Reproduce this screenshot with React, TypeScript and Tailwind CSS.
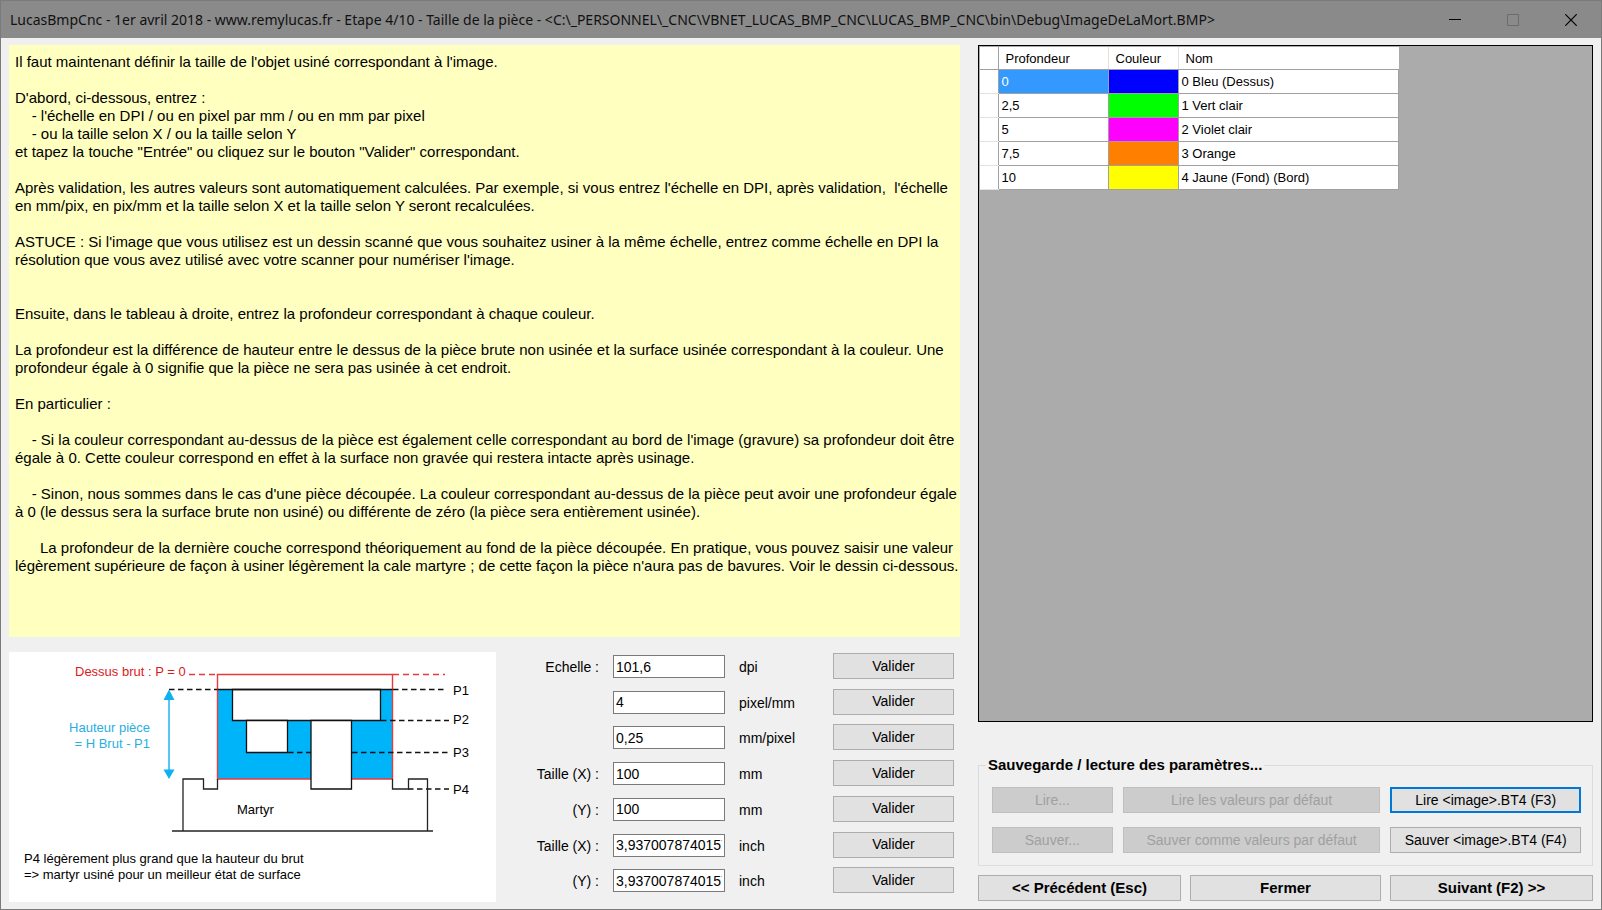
import React, { useState } from "react";

const helpText = `Il faut maintenant définir la taille de l'objet usiné correspondant à l'image.

D'abord, ci-dessous, entrez :
    - l'échelle en DPI / ou en pixel par mm / ou en mm par pixel
    - ou la taille selon X / ou la taille selon Y
et tapez la touche "Entrée" ou cliquez sur le bouton "Valider" correspondant.

Après validation, les autres valeurs sont automatiquement calculées. Par exemple, si vous entrez l'échelle en DPI, après validation,  l'échelle
en mm/pix, en pix/mm et la taille selon X et la taille selon Y seront recalculées.

ASTUCE : Si l'image que vous utilisez est un dessin scanné que vous souhaitez usiner à la même échelle, entrez comme échelle en DPI la
résolution que vous avez utilisé avec votre scanner pour numériser l'image.


Ensuite, dans le tableau à droite, entrez la profondeur correspondant à chaque couleur.

La profondeur est la différence de hauteur entre le dessus de la pièce brute non usinée et la surface usinée correspondant à la couleur. Une
profondeur égale à 0 signifie que la pièce ne sera pas usinée à cet endroit.

En particulier :

    - Si la couleur correspondant au-dessus de la pièce est également celle correspondant au bord de l'image (gravure) sa profondeur doit être
égale à 0. Cette couleur correspond en effet à la surface non gravée qui restera intacte après usinage.

    - Sinon, nous sommes dans le cas d'une pièce découpée. La couleur correspondant au-dessus de la pièce peut avoir une profondeur égale
à 0 (le dessus sera la surface brute non usiné) ou différente de zéro (la pièce sera entièrement usinée).

      La profondeur de la dernière couche correspond théoriquement au fond de la pièce découpée. En pratique, vous pouvez saisir une valeur
légèrement supérieure de façon à usiner légèrement la cale martyre ; de cette façon la pièce n'aura pas de bavures. Voir le dessin ci-dessous.`;

const fields = [
  { id: "dpi", label: "Echelle :", value: "101,6", unit: "dpi" },
  { id: "pixel-mm", label: "", value: "4", unit: "pixel/mm" },
  { id: "mm-pixel", label: "", value: "0,25", unit: "mm/pixel" },
  { id: "x-mm", label: "Taille (X) :", value: "100", unit: "mm" },
  { id: "y-mm", label: "(Y) :", value: "100", unit: "mm" },
  { id: "x-inch", label: "Taille (X) :", value: "3,93700787401575", unit: "inch" },
  { id: "y-inch", label: "(Y) :", value: "3,93700787401575", unit: "inch" },
];

const layers = [
  { depth: "0", color: "bg-[#0000ff]", name: "0 Bleu (Dessus)" },
  { depth: "2,5", color: "bg-[#00ff00]", name: "1 Vert clair" },
  { depth: "5", color: "bg-[#ff00ff]", name: "2 Violet clair" },
  { depth: "7,5", color: "bg-[#ff8000]", name: "3 Orange" },
  { depth: "10", color: "bg-[#ffff00]", name: "4 Jaune (Fond) (Bord)" },
];

const buttonBase = "h-[26px] border text-center";
const buttonNormal = "border-[#adadad] bg-[#e1e1e1]";
const buttonDisabled = "border-[#bfbfbf] bg-[#cccccc] text-[#a0a0a0]";

function Button({
  children,
  className = "",
  disabled = false,
}: {
  children: React.ReactNode;
  className?: string;
  disabled?: boolean;
}) {
  return (
    <button
      type="button"
      disabled={disabled}
      className={`${buttonBase} ${disabled ? buttonDisabled : buttonNormal} ${className}`}
    >
      {children}
    </button>
  );
}

function TitleBar() {
  return (
    <header className="flex h-[37px] items-stretch bg-[#8a8a8a] pr-px text-[#111111]">
      <h1 className="flex flex-1 items-center overflow-hidden pl-[9px] font-['Noto_Sans',sans-serif] text-[14px] whitespace-nowrap">
        LucasBmpCnc - 1er avril 2018 - www.remylucas.fr - Etape 4/10 - Taille de la pièce -
        &lt;C:\_PERSONNEL\_CNC\VBNET_LUCAS_BMP_CNC\LUCAS_BMP_CNC\bin\Debug\ImageDeLaMort.BMP&gt;
      </h1>
      <button type="button" aria-label="Réduire" className="flex w-[58px] items-center justify-center">
        <svg width="12" height="12" viewBox="0 0 12 12" stroke="#000" fill="none">
          <path d="M0 5.5H12" />
        </svg>
      </button>
      <button type="button" aria-label="Agrandir" disabled className="flex w-[58px] items-center justify-center">
        <svg width="12" height="12" viewBox="0 0 12 12" stroke="#6c6c6c" fill="none">
          <path d="M.5.5H11.5V11.5H.5Z" />
        </svg>
      </button>
      <button type="button" aria-label="Fermer la fenêtre" className="flex w-[58px] items-center justify-center">
        <svg width="12" height="12" viewBox="0 0 12 12" stroke="#000" strokeWidth="1.2" fill="none">
          <path d="M.3.3L11.7 11.7M11.7.3L.3 11.7" />
        </svg>
      </button>
    </header>
  );
}

function Diagram() {
  return (
    <svg
      width="487"
      height="250"
      viewBox="0 0 487 250"
      className="shrink-0 bg-white font-['Liberation_Sans',Arial,sans-serif] text-[13px]"
      role="img"
      aria-label="Coupe de la pièce et du martyr"
    >
      <rect x="208.5" y="37.5" width="175" height="89.5" fill="#00b4fa" />
      <path d="M208.5 127V22.5H383.5V127Z" fill="none" stroke="#e8393c" strokeWidth="1.4" />
      <path d="M180 22.5H208M384 22.5H436" fill="none" stroke="#e8393c" strokeWidth="1.4" strokeDasharray="6 4" />
      <g fill="#fff" stroke="#111" strokeWidth="1.3">
        <path d="M223.5 37.5H371.5V68.5H223.5Z" />
        <path d="M237.5 68.5H278.5V100.5H237.5Z" />
        <path d="M302 68.5H342.5V137H302Z" />
      </g>
      <path d="M208.5 37.5H383.5" stroke="#111" strokeWidth="1.3" />
      <g fill="none" stroke="#111" strokeWidth="1.3" strokeDasharray="5.5 3.5">
        <path d="M160 37.5H208" />
        <path d="M384 37.5H436" />
        <path d="M372 68.5H440" />
        <path d="M279 100.5H302" />
        <path d="M343 100.5H440" />
        <path d="M399 137H440" />
      </g>
      <g fill="none" stroke="#222" strokeWidth="1.3">
        <path d="M163 179H424" />
        <path d="M174 179V127H194.5V137H208.5V127" />
        <path d="M383.5 127V137H399.5V127H418.5V179" />
      </g>
      <path d="M160 45V119" stroke="#2db8f0" strokeWidth="1.6" />
      <path d="M160 37.5L165.5 48H154.5ZM160 127L165.5 117.5H154.5Z" fill="#0cb2f2" />
      <g>
        <text x="66" y="24" fill="#dc1a1a">Dessus brut : P = 0</text>
        <text x="141" y="80" textAnchor="end" fill="#2aaee0">Hauteur pièce</text>
        <text x="141" y="96" textAnchor="end" fill="#2aaee0">= H Brut - P1</text>
        <text x="444" y="43">P1</text>
        <text x="444" y="72">P2</text>
        <text x="444" y="105">P3</text>
        <text x="444" y="142">P4</text>
        <text x="228" y="162">Martyr</text>
        <text x="15" y="211">P4 légèrement plus grand que la hauteur du brut</text>
        <text x="15" y="227">=&gt; martyr usiné pour un meilleur état de surface</text>
      </g>
    </svg>
  );
}

function ScaleForm() {
  const [values, setValues] = useState<Record<string, string>>(
    Object.fromEntries(fields.map((f) => [f.id, f.value])),
  );
  return (
    <div className="grid flex-1 grid-rows-7">
      {fields.map((f) => (
        <div key={f.id} className="flex items-start pt-px">
          <label htmlFor={f.id} className="flex-1 pt-[6px] pr-[14px] text-right leading-4">
            {f.label}
          </label>
          <input
            id={f.id}
            type="text"
            aria-label={`${f.label} ${f.unit}`}
            value={values[f.id]}
            onChange={(e) => setValues({ ...values, [f.id]: e.target.value })}
            className="mt-[2px] h-[23px] w-[112px] border border-[#7a7a7a] bg-white px-[2px] outline-none"
          />
          <span className="w-[108px] pt-[6px] pl-[14px] leading-4">{f.unit}</span>
          <Button className="w-[121px]">Valider</Button>
        </div>
      ))}
    </div>
  );
}

function LayerTable() {
  return (
    <section className="flex-1 border border-black bg-[#ababab] p-px">
      <table className="table-fixed border-collapse bg-white text-[13px] leading-4">
        <colgroup>
          <col className="w-[18px]" />
          <col className="w-[110px]" />
          <col className="w-[70px]" />
          <col className="w-[220px]" />
        </colgroup>
        <thead>
          <tr className="h-[22px]">
            <th aria-label="Ligne" className="border-r border-b border-[#a0a0a0]" />
            <th className="border-r border-b border-r-[#e2e2e2] border-b-[#a0a0a0] pt-[2px] pl-[7px] text-left font-normal">Profondeur</th>
            <th className="border-r border-b border-r-[#e2e2e2] border-b-[#a0a0a0] pt-[2px] pl-[7px] text-left font-normal">Couleur</th>
            <th className="border-b border-[#a0a0a0] pt-[2px] pl-[7px] text-left font-normal">Nom</th>
          </tr>
        </thead>
        <tbody>
          {layers.map((l, i) => (
            <tr key={l.name} className="h-[24px]">
              <td className="border-r border-b border-r-[#a0a0a0] border-b-[#e2e2e2]" />
              <td className={`border-r border-b border-[#a0a0a0] pt-[2px] pl-[3px] ${i === 0 ? "bg-[#3399ff] text-white" : ""}`}>
                {l.depth}
              </td>
              <td className={`border-r border-b border-[#a0a0a0] ${l.color}`} />
              <td className="border-r border-b border-[#a0a0a0] pt-[2px] pl-[3px]">{l.name}</td>
            </tr>
          ))}
        </tbody>
      </table>
    </section>
  );
}

export default function App() {
  return (
    <div className="flex min-h-screen flex-col border border-[#7b7b7b] bg-[#f0f0f0] font-['Liberation_Sans',Arial,sans-serif] text-[14px] text-black">
      <TitleBar />
      <main className="grid flex-1 grid-cols-[945fr_615fr] gap-[24px] px-[8px] py-[7px]">
        <div className="flex min-w-0 flex-col gap-[15px]">
          <p className="-mr-[6px] flex-1 bg-[#ffffc0] py-[8px] pl-[6px] text-[15px] leading-[18px] whitespace-pre">
            {helpText}
          </p>
          <div className="flex">
            <Diagram />
            <ScaleForm />
          </div>
        </div>
        <div className="flex min-w-0 flex-col">
          <LayerTable />
          <fieldset className="mt-[35px] grid grid-cols-[121fr_258fr_191fr] gap-x-[10px] gap-y-[14px] border border-[#dcdcdc] pt-[14px] pr-[11px] pb-[12px] pl-[13px]">
            <legend className="-ml-[6px] px-[2px] text-[15px] leading-4 font-bold">Sauvegarde / lecture des paramètres...</legend>
            <Button disabled>Lire...</Button>
            <Button disabled>Lire les valeurs par défaut</Button>
            <button type="button" className="h-[26px] border-2 border-[#0078d7] bg-[#e1e1e1] text-center">
              Lire &lt;image&gt;.BT4 (F3)
            </button>
            <Button disabled>Sauver...</Button>
            <Button disabled>Sauver comme valeurs par défaut</Button>
            <Button>Sauver &lt;image&gt;.BT4 (F4)</Button>
          </fieldset>
          <div className="mt-[9px] mb-px grid grid-cols-[202fr_190fr_202fr] gap-[9px] text-[15px] font-bold">
            <Button>&lt;&lt; Précédent (Esc)</Button>
            <Button>Fermer</Button>
            <Button>Suivant (F2) &gt;&gt;</Button>
          </div>
        </div>
      </main>
    </div>
  );
}
